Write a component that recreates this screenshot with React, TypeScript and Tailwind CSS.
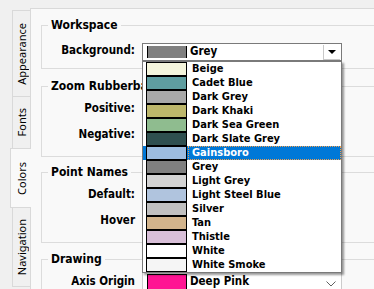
import type { ReactNode } from "react";

type Item = { name: string; color: string };

const ITEMS: Item[] = [
  { name: "Beige", color: "#f5f5dc" },
  { name: "Cadet Blue", color: "#5f9ea0" },
  { name: "Dark Grey", color: "#a9a9a9" },
  { name: "Dark Khaki", color: "#bdb76b" },
  { name: "Dark Sea Green", color: "#8fbc8f" },
  { name: "Dark Slate Grey", color: "#2f4f4f" },
  { name: "Gainsboro", color: "#dcdcdc" },
  { name: "Grey", color: "#808080" },
  { name: "Light Grey", color: "#d3d3d3" },
  { name: "Light Steel Blue", color: "#b0c4de" },
  { name: "Silver", color: "#c0c0c0" },
  { name: "Tan", color: "#d2b48c" },
  { name: "Thistle", color: "#d8bfd8" },
  { name: "White", color: "#ffffff" },
  { name: "White Smoke", color: "#f5f5f5" },
];

const SELECTED = "Gainsboro";

const Tab = ({ label, className }: { label: string; className: string }) => (
  <div className={`flex items-center justify-center border-[#d9d9d9] ${className}`}>
    <span className="rotate-180 leading-none [writing-mode:vertical-rl]">{label}</span>
  </div>
);

const Row = ({
  label,
  children,
  comboTop = "mt-[5px]",
}: {
  label: string;
  children: ReactNode;
  comboTop?: string;
}) => (
  <div className="flex h-[26px]">
    <span className="w-[93px] shrink-0 self-center text-right text-[11.5px] font-bold">{label}</span>
    <div className={`ml-[7px] ${comboTop}`}>{children}</div>
  </div>
);

// closed combo, flat style (name left empty where the open list hides it)
const ColorCombo = ({ name, color }: { name?: string; color: string }) => (
  <div className="flex h-[22px] w-[200px] items-center border border-[#cccccc] bg-white">
    <div className="ml-[4px] h-[16px] w-[40px] border border-black" style={{ backgroundColor: color }} />
    <span className="ml-[3px] flex-1 text-[11.5px] font-bold">{name}</span>
    <svg width="10" height="6" viewBox="0 0 10 6" className="mr-[5px] mt-[3px]">
      <path d="M0.5 0.5 L5 5 L9.5 0.5" fill="none" stroke="#606060" strokeWidth="1" />
    </svg>
  </div>
);

const App = () => {
  return (
    <div className="relative flex h-[289px] w-[374px] overflow-hidden bg-[#f0f0f0] text-black [font-family:'DejaVu_Sans_Condensed','DejaVu_Sans',sans-serif]">
      {/* vertical tabs */}
      <div className="flex w-[30px] shrink-0 flex-col items-end pt-[10px] text-[11px] [font-family:'Noto_Sans',sans-serif]">
        <Tab label="Appearance" className="h-[86px] w-[18px] border-l border-t" />
        <Tab label="Fonts" className="h-[52px] w-[18px] border-l border-t" />
        <Tab label="Colors" className="relative z-10 -mr-px h-[60px] w-[21px] border-l border-t border-b bg-[#f9f9f9]" />
        <Tab label="Navigation" className="h-[79px] w-[18px] border-l border-b" />
      </div>

      {/* page */}
      <div className="mt-[8px] flex w-[420px] shrink-0 flex-col border-l border-t border-[#d9d9d9] bg-[#f9f9f9] pl-[10px]">
        <fieldset className="mt-[9px] border border-[#dcdcdc] pb-[4px] pt-[5px]">
          <legend className="ml-[6px] px-[3px] text-[12px] font-bold leading-[15px]">Workspace</legend>
          <div className="flex h-[26px]">
            <span className="w-[93px] shrink-0 self-center text-right text-[11.5px] font-bold">Background:</span>
            {/* open combo */}
            <div className="ml-[7px] mt-[5px] flex h-[18px] w-[200px] items-center border border-[#7a7a7a] bg-white">
              <div className="ml-[4px] h-[12px] w-[40px] border-x border-black bg-[#808080]" />
              <span className="ml-[3px] flex-1 text-[11.5px] font-bold">Grey</span>
              <div className="mr-px flex h-[15px] w-[17px] items-center justify-center border-b border-l border-[#c8c8c8]">
                <svg width="8" height="4" viewBox="0 0 8 4">
                  <path d="M0 0 H8 L4 4 Z" fill="#000" />
                </svg>
              </div>
            </div>
          </div>
        </fieldset>

        <fieldset className="mt-[10px] border border-[#dcdcdc] pb-[8px] pt-[2px]">
          <legend className="ml-[6px] px-[3px] text-[12px] font-bold leading-[15px]">Zoom Rubberband</legend>
          <Row label="Positive:">
            <ColorCombo color="#0000ff" />
          </Row>
          <Row label="Negative:">
            <ColorCombo color="#008000" />
          </Row>
        </fieldset>

        <fieldset className="mt-[8px] border border-[#dcdcdc] pb-[8px] pt-[2px]">
          <legend className="ml-[6px] px-[3px] text-[12px] font-bold leading-[15px]">Point Names</legend>
          <Row label="Default:">
            <ColorCombo color="#000000" />
          </Row>
          <Row label="Hover">
            <ColorCombo color="#ff0000" />
          </Row>
        </fieldset>

        <fieldset className="mt-[9px] border border-[#dcdcdc] pb-[8px] pt-[2px]">
          <legend className="ml-[6px] px-[3px] text-[12px] font-bold leading-[15px]">Drawing</legend>
          <Row label="Axis Origin" comboTop="mt-[2px]">
            <ColorCombo name="Deep Pink" color="#ff1493" />
          </Row>
        </fieldset>
      </div>

      {/* dropdown list of the Background combo */}
      <div className="absolute left-[142px] top-[61px] z-20 w-[200px] border border-[#7a7a7a] bg-white shadow-[2px_2px_2px_rgba(0,0,0,0.4)]">
        {ITEMS.map((item) => {
          const sel = item.name === SELECTED;
          return (
            <div key={item.name} className={`flex h-[14px] pl-[3px] ${sel ? "bg-[#0078d7]" : ""}`}>
              <div
                className="h-[14px] w-[41px] shrink-0 border border-black"
                style={{ backgroundColor: sel ? "#9dbde0" : item.color }}
              />
              <span
                className={`ml-px flex-1 pl-[4px] text-[11px] font-bold leading-[14px] ${
                  sel ? "text-white outline-1 -outline-offset-1 outline-dotted outline-[#f0a050]" : ""
                }`}
              >
                {item.name}
              </span>
            </div>
          );
        })}
      </div>
    </div>
  );
};

export default App;
